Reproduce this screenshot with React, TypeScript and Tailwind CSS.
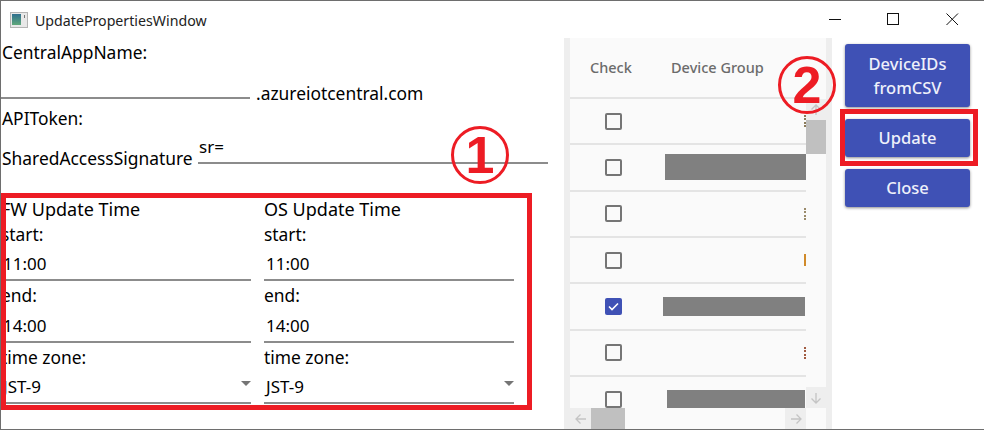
const FONT = "font-['Noto_Sans','Open_Sans',sans-serif]";

const TitleIcon = () => (
  <svg width="18" height="16" viewBox="0 0 18 16">
    <defs>
      <linearGradient id="pane" x1="0" y1="0" x2="0" y2="1">
        <stop offset="0" stopColor="#2f6f8f" />
        <stop offset="1" stopColor="#5fa87a" />
      </linearGradient>
    </defs>
    <rect x="0.5" y="0.5" width="17" height="15" fill="#e8e8e8" stroke="#b4b4b4" />
    <rect x="2" y="2" width="9" height="11" fill="url(#pane)" />
    <rect x="14" y="3" width="1" height="3" fill="#777" />
  </svg>
);

const WindowButtons = () => (
  <div className="flex h-full items-center">
    <svg width="13" height="13" viewBox="0 0 13 13" className="mr-[45px]">
      <path d="M0 6.5H12" stroke="#111" strokeWidth="1" />
    </svg>
    <svg width="13" height="13" viewBox="0 0 13 13" className="mr-[46px]">
      <rect x="0.5" y="0.5" width="11" height="11" fill="none" stroke="#111" />
    </svg>
    <svg width="13" height="13" viewBox="0 0 13 13" className="mr-[25px]">
      <path d="M0.5 0.5L12 12M12 0.5L0.5 12" stroke="#111" strokeWidth="1" />
    </svg>
  </div>
);

const Label = ({ text, className = "" }: { text: string; className?: string }) => (
  <div className={`h-[22px] whitespace-nowrap ${className || ""} ${className.includes("leading-") ? "" : "leading-[22px]"} ${className.includes("text-[") ? "" : "text-[17.4px]"}`}>
    {text}
  </div>
);

const Input = ({ value, select, top = "pt-[4px]" }: { value: string; select?: boolean; top?: string }) => (
  <div className={`relative flex h-[36px] items-center border-b-2 border-[#8c8c8c] text-[17px] ${top}`}>
    <span className="pl-[2px]">{value}</span>
    {select && (
      <span className="absolute right-0 top-[13px] h-0 w-0 border-x-[5px] border-t-[5px] border-x-transparent border-t-[#757575]" />
    )}
  </div>
);

const TimeColumn = ({ title }: { title: string }) => (
  <div className="w-[250px]">
    <Label text={title} className="mb-[3px] text-[18px]" />
    <Label text="start:" />
    <Input value="11:00" />
    <Label text="end:" className="mt-[4px] leading-[20px]" />
    <Input value="14:00" top="pt-[3px]" />
    <Label text="time zone:" className="mt-[3px]" />
    <Input value="JST-9" select />
  </div>
);

const rows = [
  { bar: "", frag: "border-l-2 border-dotted border-[#8a7a5a]" },
  { bar: "w-[141px] h-[26px] ml-[10px]", frag: "" },
  { bar: "", frag: "border-l-2 border-dotted border-[#9a8a6a]" },
  { bar: "", frag: "border-l-2 border-[#d08a2a]" },
  { bar: "w-[142px] h-[19px] ml-[8px]", frag: "", checked: true },
  { bar: "", frag: "border-l-2 border-dotted border-[#a05a40]" },
  { bar: "w-[138px] h-[18px] ml-[12px]", frag: "" },
];

const CheckBox = ({ checked }: { checked?: boolean }) =>
  checked ? (
    <div className="flex h-[17px] w-[17px] items-center justify-center rounded-[2px] bg-[#3f51b5]">
      <svg width="13" height="13" viewBox="0 0 13 13">
        <path d="M2 6.5L5 9.5L11 3.5" fill="none" stroke="#fff" strokeWidth="1.6" />
      </svg>
    </div>
  ) : (
    <div className="h-[17px] w-[17px] rounded-[2px] border-2 border-[#757575]" />
  );

const DeviceTable = () => (
  <div className="flex h-[391px] w-[268px] flex-col border-x-[6px] border-[#eeeeee] bg-[#fafafa]">
    <div className="flex h-[59px] shrink-0 items-center text-[14.5px] font-medium text-[#6b6b6b]">
      <span className="w-[101px] pl-[20px]">Check</span>
      <span>Device Group</span>
    </div>
    <div className="flex min-h-0 flex-1">
      <div className="flex w-[236px] flex-col">
        <div className="min-h-0 flex-1 overflow-hidden">
          {rows.map((r, i) => (
            <div key={i} className="flex h-[46.33px] items-center border-t-2 border-[#e4e4e4]">
              <div className="flex w-[85px] shrink-0 justify-end pr-[33px] pl-[35px]">
                <CheckBox checked={r.checked} />
              </div>
              {r.bar ? <div className={`bg-[#808080] ${r.bar}`} /> : <div className={`ml-auto h-[12px] w-[2px] ${r.frag}`} />}
            </div>
          ))}
        </div>
        <div className="flex h-[21px] shrink-0 items-center bg-[#fafafa] text-[#c4c4c4]">
          <div className="flex h-full w-[21px] items-center justify-center bg-[#eeeeee]">
            <svg width="12" height="12" viewBox="0 0 12 12">
              <path d="M11 6H1M5.5 1.5L1 6L5.5 10.5" fill="none" stroke="currentColor" strokeWidth="1.3" />
            </svg>
          </div>
          <div className="h-full w-[34px] bg-[#c0c0c0]" />
          <div className="flex-1" />
          <div className="flex h-full w-[21px] items-center justify-center bg-[#eeeeee]">
            <svg width="12" height="12" viewBox="0 0 12 12">
              <path d="M1 6H11M6.5 1.5L11 6L6.5 10.5" fill="none" stroke="currentColor" strokeWidth="1.3" />
            </svg>
          </div>
        </div>
      </div>
      <div className="flex h-[311px] w-[21px] flex-col text-[#c4c4c4]">
        <div className="mt-[2px] flex h-[21px] items-center justify-center bg-[#eeeeee]">
          <svg width="12" height="12" viewBox="0 0 12 12">
            <path d="M6 11V1M1.5 5.5L6 1L10.5 5.5" fill="none" stroke="currentColor" strokeWidth="1.3" />
          </svg>
        </div>
        <div className="h-[34px] bg-[#c0c0c0]" />
        <div className="flex-1" />
        <div className="flex h-[21px] items-center justify-center bg-[#eeeeee]">
          <svg width="12" height="12" viewBox="0 0 12 12">
            <path d="M6 1V11M1.5 6.5L6 11L10.5 6.5" fill="none" stroke="currentColor" strokeWidth="1.3" />
          </svg>
        </div>
      </div>
    </div>
  </div>
);

const ActionButton = ({ className, children }: { className: string; children: React.ReactNode }) => (
  <button
    className={`flex w-[125px] items-center justify-center rounded-[3px] bg-[#3f51b5] text-center text-[16.5px] leading-[24px] font-medium text-[#eef0fa] shadow-[0_1px_3px_rgba(0,0,0,0.45)] ${className}`}
  >
    {children}
  </button>
);

const Marker = ({ digit, className }: { digit: string; className: string }) => (
  <div
    className={`absolute flex h-[58px] w-[58px] items-center justify-center rounded-full border-[3px] border-[#ed1c24] font-['Liberation_Sans',sans-serif] text-[52px] leading-none font-bold text-[#ed1c24] ${className}`}
  >
    {digit}
  </div>
);

export default function App() {
  return (
    <div className={`relative h-[430px] w-[984px] overflow-hidden border-y border-l border-[#6e6e6e] bg-white text-black ${FONT}`}>
      <div className="flex h-[37px] items-center justify-between">
        <div className="flex items-center gap-[7px] pl-[9px] pt-[2px] text-[14.2px]">
          <TitleIcon />
          <span className="text-[#222]">UpdatePropertiesWindow</span>
        </div>
        <WindowButtons />
      </div>

      <div className="flex">
        <div className="w-[563px] shrink-0 pt-[3px]">
          <Label text="CentralAppName:" className="pl-[1px]" />
          <div className="flex h-[36px]">
            <div className="w-[249px] border-b-2 border-[#8c8c8c]" />
            <span className="ml-[6px] pt-[19px] text-[17.4px] leading-[22px]">.azureiotcentral.com</span>
          </div>
          <Label text="APIToken:" className="mt-[7px] pl-[1px] leading-[24px]" />
          <div className="flex h-[36px] w-[547px] items-end pl-[1px]">
            <span className="mb-[-5px] w-[196px] shrink-0 text-[17.4px] leading-[22px]">SharedAccessSignature</span>
            <div className="h-[36px] flex-1 border-b-2 border-[#8c8c8c] pt-[9px] text-[17px] leading-[20px]">
              <span className="pl-[1px]">sr=</span>
            </div>
          </div>
          <div className="mt-[34px] flex gap-[13px]">
            <TimeColumn title="FW Update Time" />
            <TimeColumn title="OS Update Time" />
          </div>
        </div>

        <DeviceTable />

        <div className="flex flex-col gap-[12px] pt-[6px] pl-[13px]">
          <ActionButton className="h-[63px]">
            DeviceIDs
            <br />
            fromCSV
          </ActionButton>
          <ActionButton className="h-[38px]">Update</ActionButton>
          <ActionButton className="h-[38px]">Close</ActionButton>
        </div>
      </div>

      {/* annotations drawn over the screenshot */}
      <div className="absolute top-[192px] left-0 h-[217px] w-[531px] border-[5px] border-[#ed1c24]" />
      <div className="absolute top-[108px] left-[839px] h-[57px] w-[138px] border-[5px] border-[#ed1c24]" />
      <Marker digit="1" className="top-[125px] left-[450px]" />
      <Marker digit="2" className="top-[55px] left-[777px]" />
    </div>
  );
}
